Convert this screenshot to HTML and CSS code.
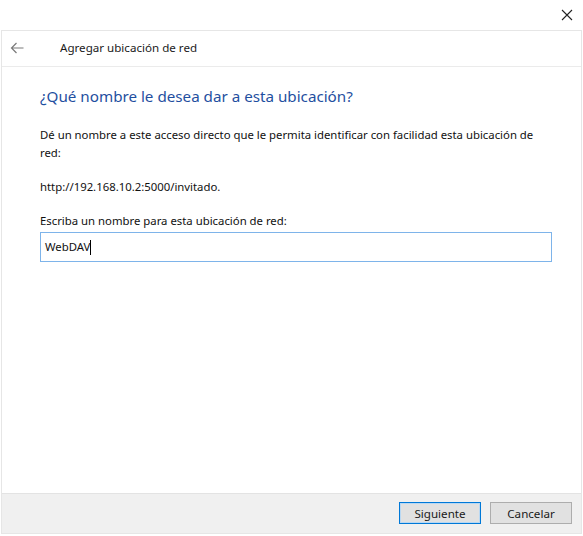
FILE: index.html
```html
<!DOCTYPE html>
<html lang="es">
<head>
<meta charset="utf-8">
<title>Agregar ubicación de red</title>
<link rel="stylesheet" href="styles.css">
</head>
<body>
<div class="titlebar">
  <svg class="close" width="12" height="12" viewBox="0 0 12 12"><path d="M1 1 L11 11 M11 1 L1 11" stroke="#222" stroke-width="1.1" fill="none"/></svg>
</div>
<div class="window">
  <div class="header">
    <svg class="back" width="14" height="12" viewBox="0 0 14 12"><path d="M13.5 6 H1.5 M6.5 1 L1.5 6 L6.5 11" stroke="#7a7a7a" stroke-width="1.2" fill="none"/></svg>
    <span class="title">Agregar ubicación de red</span>
  </div>
  <div class="content">
    <h1 class="heading">¿Qué nombre le desea dar a esta ubicación?</h1>
    <p class="text">Dé un nombre a este acceso directo que le permita identificar con facilidad esta ubicación de red:</p>
    <p class="text url">http://192.168.10.2:5000/invitado.</p>
    <p class="text label">Escriba un nombre para esta ubicación de red:</p>
    <div class="input">WebDAV<span class="caret"></span></div>
  </div>
  <div class="footer">
    <button class="btn primary">Siguiente</button>
    <button class="btn">Cancelar</button>
  </div>
</div>
</body>
</html>
```
FILE: styles.css
```css
html, body {
  margin: 0;
  padding: 0;
  background: #ffffff;
}
body {
  font-family: "Noto Sans", "Liberation Sans", sans-serif;
  color: #000;
  width: 583px;
  height: 536px;
  overflow: hidden;
}
.titlebar {
  height: 30px;
  display: flex;
  justify-content: flex-end;
  align-items: center;
  padding-right: 10px;
  box-sizing: border-box;
}
.close {
  display: block;
}
.window {
  margin-left: 1px;
  width: 581px;
  height: 504px;
  box-sizing: border-box;
  border: 1px solid #e6e6e6;
  display: flex;
  flex-direction: column;
}
.header {
  height: 36px;
  box-sizing: border-box;
  border-bottom: 1px solid #ebebeb;
  display: flex;
  align-items: center;
  padding-bottom: 2px;
}
.back {
  margin-left: 8px;
  margin-right: 36px;
}
.title {
  font-size: 11.6px;
  color: #1a1a1a;
}
.content {
  flex: 1;
  padding: 18px 28px 0 38px;
}
.heading {
  margin: 0 0 19px 0;
  font-size: 15.2px;
  font-weight: normal;
  color: #1f4fa0;
  line-height: 22px;
}
.text {
  margin: 0;
  font-size: 11.35px;
  line-height: 18px;
  color: #111;
}
.url {
  margin-top: 16px;
}
.label {
  margin-top: 16px;
}
.input {
  margin-top: 2px;
  height: 30px;
  box-sizing: border-box;
  border: 1px solid #7eb4ea;
  font-size: 11.35px;
  padding: 5px 4px;
  line-height: 18px;
  color: #111;
  width: 512px;
  display: flex;
  align-items: center;
}
.caret {
  display: inline-block;
  width: 1px;
  height: 15px;
  background: #000;
}
.footer {
  height: 38px;
  background: #f0f0f0;
  border-top: 1px solid #e3e3e3;
  display: flex;
  justify-content: flex-end;
  align-items: center;
  gap: 9px;
  padding-right: 9px;
  padding-bottom: 1px;
}
.btn {
  font-family: "Noto Sans", "Liberation Sans", sans-serif;
  font-size: 11.6px;
  height: 22px;
  width: 82px;
  background: #e1e1e1;
  border: 1px solid #adadad;
  color: #1a1a1a;
  padding: 0;
  margin: 0;
}
.btn.primary {
  border: 1px solid #0078d7;
  box-shadow: inset 0 0 0 1px #b9d8f3;
}
```
